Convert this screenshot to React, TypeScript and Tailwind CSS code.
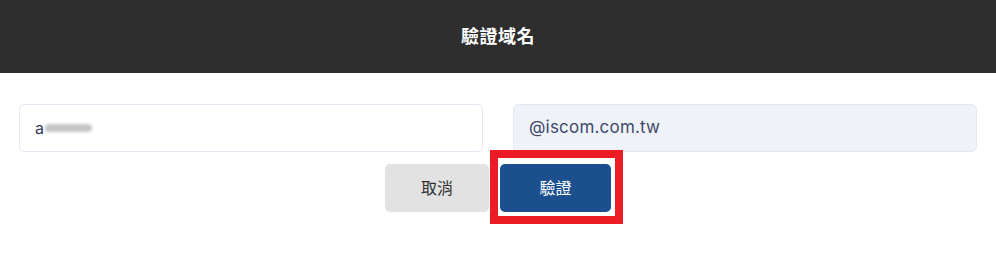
import React from "react";

const FONT = { fontFamily: "Inter, 'Noto Sans CJK TC', sans-serif" };

export default function App() {
  return (
    <div className="h-[267px] w-[996px] bg-white" style={FONT}>
      <div className="flex h-[73px] items-center justify-center bg-[#2e2e2e]">
        <h1 className="text-[18px] font-bold tracking-[0.5px] text-white">驗證域名</h1>
      </div>

      <div className="px-[19px] pt-[31px]">
        <div className="flex gap-[30px]">
          <div className="flex h-[48px] flex-1 items-center rounded-[5px] border border-[#e6e6f2] bg-white px-[15px] text-[16px] text-[#2f3a5c]">
            <span>a</span>
            <span className="ml-[1px] inline-block h-[8px] w-[47px] rounded-full bg-[#c4c4c4] blur-[1.5px]" />
          </div>
          <div className="flex h-[48px] flex-1 items-center rounded-[5px] border border-[#e3e7ef] bg-[#eff2f8] px-[15px] text-[17px] tracking-[0.2px] text-[#3d4a6b]">
            @iscom.com.tw
          </div>
        </div>

        <div className="mt-[12px] flex justify-center gap-[11px]">
          <button className="h-[48px] w-[104px] rounded-[5px] bg-[#e2e2e2] text-[16px] text-[#333333]">
            取消
          </button>
          <div className="relative">
            <button className="h-[48px] w-[111px] rounded-[5px] bg-[#1b4f8e] text-[16px] text-white">
              驗證
            </button>
            <div className="pointer-events-none absolute -top-[14px] -left-[10px] -right-[12px] -bottom-[12px] border-[8px] border-[#ec1c24]" />
          </div>
        </div>
      </div>
    </div>
  );
}
